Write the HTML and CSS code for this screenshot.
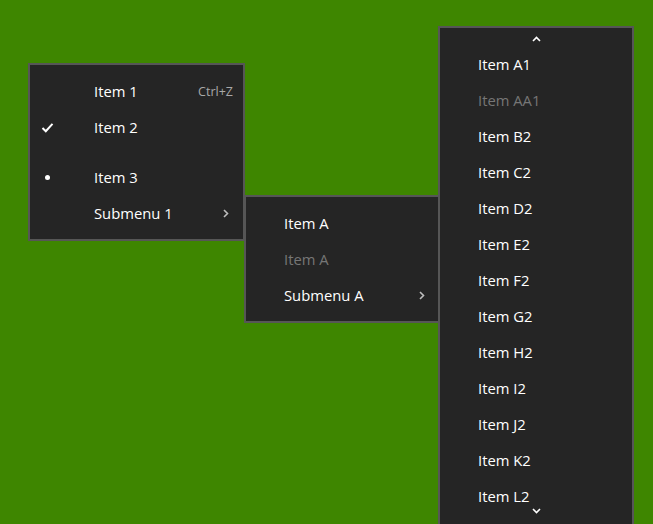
FILE: index.html
```html
<!DOCTYPE html>
<html>
<head>
<meta charset="utf-8">
<link rel="stylesheet" href="styles.css">
</head>
<body>
<div class="canvas">
  <div class="menu menu-main">
    <div class="row">
      <span class="icon"></span><span class="label">Item 1</span><span class="shortcut">Ctrl+Z</span>
    </div>
    <div class="row">
      <span class="icon"><svg width="13" height="11" viewBox="0 0 13 11"><path d="M1.5 6 L4.8 9.2 L11.5 1.8" fill="none" stroke="#fff" stroke-width="2"/></svg></span><span class="label">Item 2</span>
    </div>
    <div class="separator"></div>
    <div class="row">
      <span class="icon"><span class="bullet"></span></span><span class="label">Item 3</span>
    </div>
    <div class="row">
      <span class="icon"></span><span class="label">Submenu 1</span><span class="arrow"><svg width="6" height="9" viewBox="0 0 6 9"><path d="M1 1 L4.5 4.5 L1 8" fill="none" stroke="#bdbdbd" stroke-width="1.6"/></svg></span>
    </div>
  </div>

  <div class="menu menu-sub">
    <div class="row plain"><span class="label">Item A</span></div>
    <div class="row plain disabled"><span class="label">Item A</span></div>
    <div class="row plain"><span class="label">Submenu A</span><span class="arrow"><svg width="6" height="9" viewBox="0 0 6 9"><path d="M1 1 L4.5 4.5 L1 8" fill="none" stroke="#bdbdbd" stroke-width="1.6"/></svg></span></div>
  </div>

  <div class="menu menu-scroll">
    <div class="scroll-btn up"><svg width="9" height="6" viewBox="0 0 9 6"><path d="M1 5 L4.5 1.5 L8 5" fill="none" stroke="#fff" stroke-width="1.6"/></svg></div>
    <div class="list">
      <div class="row plain"><span class="label">Item A1</span></div>
      <div class="row plain disabled"><span class="label">Item AA1</span></div>
      <div class="row plain"><span class="label">Item B2</span></div>
      <div class="row plain"><span class="label">Item C2</span></div>
      <div class="row plain"><span class="label">Item D2</span></div>
      <div class="row plain"><span class="label">Item E2</span></div>
      <div class="row plain"><span class="label">Item F2</span></div>
      <div class="row plain"><span class="label">Item G2</span></div>
      <div class="row plain"><span class="label">Item H2</span></div>
      <div class="row plain"><span class="label">Item I2</span></div>
      <div class="row plain"><span class="label">Item J2</span></div>
      <div class="row plain"><span class="label">Item K2</span></div>
      <div class="row plain"><span class="label">Item L2</span></div>
    </div>
    <div class="scroll-btn down"><svg width="9" height="6" viewBox="0 0 9 6"><path d="M1 1 L4.5 4.5 L8 1" fill="none" stroke="#fff" stroke-width="1.6"/></svg></div>
  </div>
</div>
</body>
</html>
```
FILE: styles.css
```css
html, body {
  margin: 0;
  padding: 0;
  overflow: hidden;
}
body {
  background: #3e8600;
  font-family: "Open Sans", "Noto Sans", sans-serif;
  font-size: 14.8px;
  color: #ffffff;
}
.canvas {
  position: relative;
  width: 653px;
  height: 524px;
  overflow: hidden;
}
.menu {
  position: absolute;
  box-sizing: border-box;
  background: #252525;
  border: 2px solid #565656;
  padding: 8px 0;
}
.menu-main {
  left: 28px;
  top: 63px;
  width: 217px;
  height: 178px;
}
.menu-sub {
  left: 244px;
  top: 195px;
  width: 196px;
  height: 128px;
}
.menu-scroll {
  left: 438px;
  top: 26px;
  width: 196px;
  height: 520px;
  padding: 18px 0 0 0;
  overflow: hidden;
}
.row {
  display: flex;
  align-items: center;
  height: 36px;
  padding: 0 10px 0 0;
}
.row.plain {
  padding-left: 38px;
}
.row.disabled {
  color: #767676;
}
.icon {
  width: 34px;
  flex: none;
  display: flex;
  justify-content: center;
  align-items: center;
  margin-right: 30px;
}
.bullet {
  width: 5px;
  height: 5px;
  border-radius: 50%;
  background: #fff;
}
.label {
  flex: 1;
  white-space: nowrap;
}
.shortcut {
  font-size: 12.5px;
  color: #a8a8a8;
}
.arrow {
  display: flex;
  align-items: center;
  padding-right: 4px;
}
.menu-sub .arrow {
  padding-right: 3px;
}
.separator {
  height: 14px;
}
.scroll-btn {
  position: absolute;
  left: 0;
  right: 0;
  display: flex;
  justify-content: center;
}
.scroll-btn.up {
  top: 8px;
}
.scroll-btn.down {
  top: 480px;
}
```
